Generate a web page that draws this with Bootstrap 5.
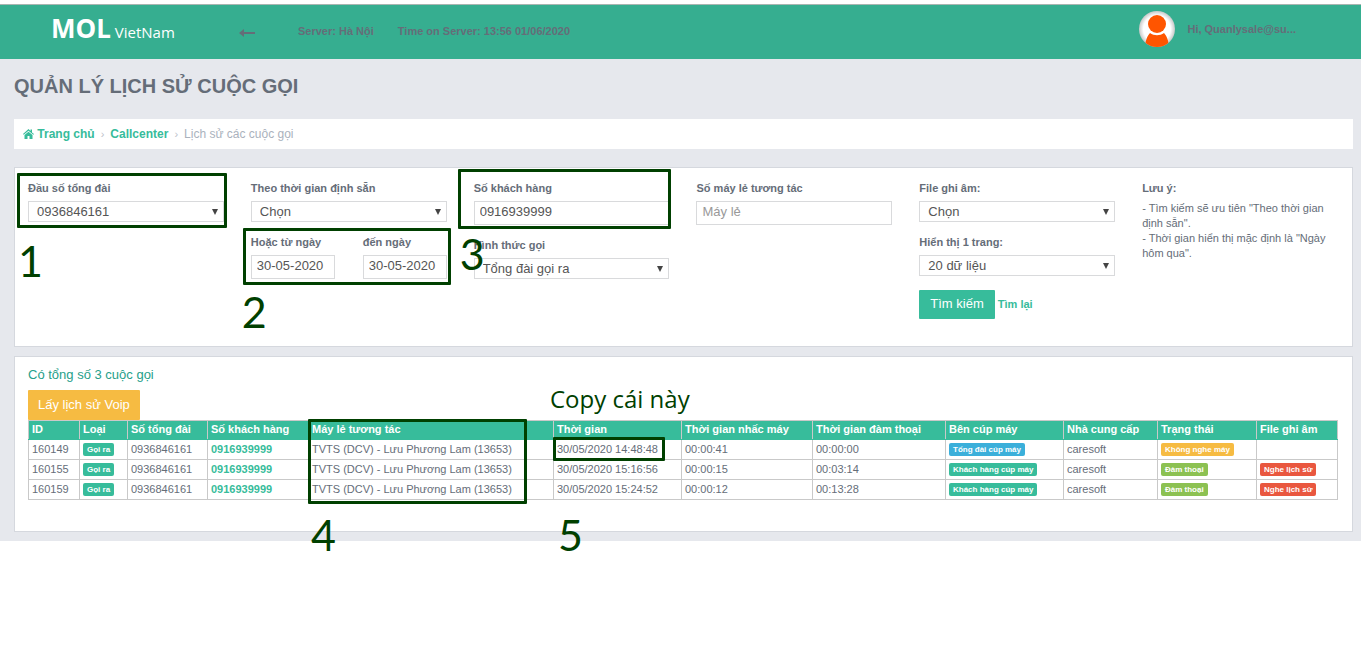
<!DOCTYPE html>
<html lang="vi">
<head>
<meta charset="utf-8">
<meta name="viewport" content="width=device-width, initial-scale=1">
<title>Quản lý lịch sử cuộc gọi</title>
<link href="https://cdn.jsdelivr.net/npm/bootstrap@5.3.0/dist/css/bootstrap.min.css" rel="stylesheet">
<style>
:root { --mint: #37bc9b; --note: #004000; --line: #d5d8de; }
body { font-family: "Liberation Sans", Arial, sans-serif; font-size: 11px; line-height: 15px; color: #656d78; background: #fff; min-height: 100vh; padding-top: 4px; }
a { color: var(--mint); text-decoration: none; font-weight: bold; }
.topbar { border-top: 1px solid #a9b5b1; background: #36ae90; height: 55px; padding: 0 65px 0 51px; font-weight: bold; }
.brand { font-family: "Open Sans", sans-serif; color: #fff; font-weight: normal; font-size: 15px; line-height: 32px; width: 188px; margin-top: 7px; }
.brand:hover { color: #fff; }
.brand b { font-size: 26px; }
.back-btn { color: #656d78; margin-top: 23px; }
.server, .clock { margin-top: 19px; }
.server { margin-left: 41px; }
.clock { margin-left: 24px; }
.account { margin-top: 4px; line-height: 13px; }
.workspace { background: #e6e8ed; padding: 14px 8px 9px 14px; }
h1 { font-size: 20px; line-height: 26px; font-weight: bold; margin: 0 0 20px; }
.crumbs { background: #fff; height: 30px; padding: 0 9px; margin-bottom: 18px; font-size: 12px; gap: 6px; }
.crumbs svg { vertical-align: -1px; }
.crumbs .sep { color: #bcc1c9; font-size: 11px; }
.crumbs .here { color: #aab2bd; }
.panel { background: #fff; border: 1px solid var(--line); }
.filters { min-height: 180px; padding-top: 12px; margin-bottom: 9px; }
.filters .row > * { padding-left: 13px; padding-right: 14px; }
.filters .row > .notes { padding-right: 10px; }
.filters label, .caption { display: block; font-weight: bold; line-height: 16px; margin-bottom: 5px; }
.field { position: relative; margin-bottom: 12px; }
.box { display: block; width: 100%; border: 1px solid #d9dadc; border-radius: 0; background: #fff; color: #555; font-size: 13px; height: 24px; padding: 0 5px 3px; }
.box::placeholder { color: #999; opacity: 1; }
select.box { height: 21px; padding: 0 8px 1px; appearance: none; background: #fff url("data:image/svg+xml,%3Csvg xmlns='http://www.w3.org/2000/svg' viewBox='0 0 6 6'%3E%3Cpath d='M0 0h6L3 6z' fill='%23444'/%3E%3C/svg%3E") no-repeat right 5px center / 6px 6px; }
.dates { display: grid; grid-template-columns: 1fr 1fr; column-gap: 28px; }
.act { border: 0; border-radius: 1px; color: #fff; font-size: 13px; line-height: 15px; padding: 6px 11px 8px; }
.act.search { background: var(--mint); margin-top: 2px; }
.act.voip { background: #f6bb42; padding: 7px 10px 8px; }
.results { padding: 10px 14px 31px 13px; }
.total { color: #26a08a; font-size: 13px; line-height: 15px; margin: 0 0 8px; }
.calls { width: 100%; table-layout: fixed; border-collapse: collapse; }
.calls th, .calls td { border: 1px solid #c9c9c9; height: 20px; padding: 0 3px 1px; line-height: 15px; white-space: nowrap; }
.calls th { height: 19px; background: var(--mint); color: #fff; border-bottom-color: var(--mint); }
.tag { display: inline-block; border-radius: 2px; background: var(--mint); color: #fff; font-size: 8px; font-weight: bold; line-height: 9px; padding: 2px 4px; vertical-align: middle; }
.tag.blue { background: #3bafda; } .tag.amber { background: #f6bb42; } .tag.lime { background: #8cc152; } .tag.red { background: #e9573f; }
/* guide marks laid over the form and the table */
.guide { position: absolute; border: 3px solid var(--note); border-radius: 1px; z-index: 2; pointer-events: none; }
.step { position: absolute; z-index: 3; font-family: Lato, sans-serif; font-size: 43px; line-height: 43px; color: var(--note); pointer-events: none; font-weight: normal; }
.hint { position: absolute; z-index: 3; font-family: "Open Sans", sans-serif; font-size: 24px; line-height: 32px; color: var(--note); white-space: nowrap; font-weight: normal; left: -4px; top: -38px; }
.g1 { inset: -7px -3px -6px -11px; } .s1 { left: -10px; top: 59px; }
.g2 { inset: -6px -4px -6px -8px; } .s2 { left: -9px; top: 56px; }
.g3 { inset: -11px -2px -4px -16px; } .s3 { left: -14px; top: 52px; }
.anchor { position: relative; overflow: visible; }
.g4 { left: -1px; top: -2px; width: 219px; height: 85px; } .s4 { left: 2px; top: 92px; }
.g5 { left: -1px; top: -3px; width: 112px; height: 24px; } .s5 { left: 4px; top: 92px; }
</style>
</head>
<body>
<header class="topbar d-flex align-items-start">
  <a class="brand" href="#"><b>MOL</b> VietNam</a>
  <a class="back-btn" href="#" aria-label="Quay lại"><svg class="d-block" width="18" height="10" viewBox="0 0 18 10"><path d="M0 5L5 1v3h11v2H5v3z" fill="currentColor"/></svg></a>
  <span class="server">Server: Hà Nội</span>
  <span class="clock">Time on Server: 13:56 01/06/2020</span>
  <div class="account d-flex ms-auto align-items-center">
    <svg width="36" height="40" viewBox="0 0 36 40"><defs><radialGradient id="av"><stop offset=".75" stop-color="#fff"/><stop offset="1" stop-color="#c8c8c8"/></radialGradient><clipPath id="round"><circle cx="18" cy="20" r="18"/></clipPath></defs><circle cx="18" cy="20" r="18" fill="url(#av)"/><g fill="#ff5500" clip-path="url(#round)"><circle cx="18" cy="15" r="9"/><path d="M6 40c0-7 2-13 5-16 4 3 10 3 14 0 3 3 5 9 5 16z"/></g></svg>
    <span class="ms-2 ps-1">Hi, Quanlysale@su...</span>
  </div>
</header>
<main class="workspace">
  <h1>QUẢN LÝ LỊCH SỬ CUỘC GỌI</h1>
  <nav class="crumbs d-flex align-items-center" aria-label="breadcrumb">
    <a href="#"><svg width="11" height="10" viewBox="0 0 11 10" fill="currentColor"><path d="M0 5L5.500 0 7.500 2V.5H9v3L11 5l-.7.8-4.800-4-4.800 4z"/><path d="M1.500 6l4-3.300 4 3.300v4H6.500V7h-2v3h-3z"/></svg> Trang chủ</a>
    <span class="sep">›</span><a href="#">Callcenter</a><span class="sep">›</span><span class="here">Lịch sử các cuộc gọi</span>
  </nav>
  <form class="panel filters">
    <div class="row g-0">
      <div class="col-2">
        <div class="field"><label for="hotline">Đầu số tổng đài</label><select id="hotline" class="box"><option>0936846161</option></select><span class="guide g1"></span><span class="step s1">1</span></div>
      </div>
      <div class="col-2">
        <div class="field"><label for="preset">Theo thời gian định sẵn</label><select id="preset" class="box"><option>Chọn</option></select></div>
        <div class="field dates">
          <div><label for="from">Hoặc từ ngày</label><input id="from" class="box" value="30-05-2020"></div>
          <div><label for="to">đến ngày</label><input id="to" class="box" value="30-05-2020"></div>
          <span class="guide g2"></span><span class="step s2">2</span>
        </div>
      </div>
      <div class="col-2">
        <div class="field"><label for="customer">Số khách hàng</label><input id="customer" class="box" value="0916939999"><span class="guide g3"></span><span class="step s3">3</span></div>
        <div class="field"><label for="kind">Hình thức gọi</label><select id="kind" class="box"><option>Tổng đài gọi ra</option></select></div>
      </div>
      <div class="col-2">
        <div class="field"><label for="ext">Số máy lẻ tương tác</label><input id="ext" class="box" placeholder="Máy lẻ"></div>
      </div>
      <div class="col-2">
        <div class="field"><label for="record">File ghi âm:</label><select id="record" class="box"><option>Chọn</option></select></div>
        <div class="field"><label for="size">Hiển thị 1 trang:</label><select id="size" class="box"><option>20 dữ liệu</option></select></div>
        <button type="button" class="act search">Tìm kiếm</button> <a href="#">Tìm lại</a>
      </div>
      <div class="col-2 notes">
        <div class="caption">Lưu ý:</div>
        <div>- Tìm kiếm sẽ ưu tiên "Theo thời gian định sẵn".<br>- Thời gian hiển thị mặc định là "Ngày hôm qua".</div>
      </div>
    </div>
  </form>
  <section class="panel results">
    <p class="total">Có tổng số 3 cuộc gọi</p>
    <button type="button" class="act voip d-block">Lấy lịch sử Voip</button>
    <table class="calls">
      <colgroup><col width="51"><col width="48"><col width="80"><col width="101"><col width="245"><col width="128"><col width="131"><col width="133"><col width="118"><col width="94"><col width="99"><col width="81"></colgroup>
      <thead><tr><th>ID</th><th>Loại</th><th>Số tổng đài</th><th>Số khách hàng</th><th class="anchor">Máy lẻ tương tác<span class="guide g4"></span><span class="step s4">4</span></th><th class="anchor">Thời gian<span class="hint">Copy cái này</span><span class="step s5">5</span></th><th>Thời gian nhấc máy</th><th>Thời gian đàm thoại</th><th>Bên cúp máy</th><th>Nhà cung cấp</th><th>Trạng thái</th><th>File ghi âm</th></tr></thead>
      <tbody>
        <tr><td>160149</td><td><span class="tag">Gọi ra</span></td><td>0936846161</td><td><a href="#">0916939999</a></td><td>TVTS (DCV) - Lưu Phương Lam (13653)</td><td class="anchor">30/05/2020 14:48:48<span class="guide g5"></span></td><td>00:00:41</td><td>00:00:00</td><td><span class="tag blue">Tổng đài cúp máy</span></td><td>caresoft</td><td><span class="tag amber">Không nghe máy</span></td><td></td></tr>
        <tr><td>160155</td><td><span class="tag">Gọi ra</span></td><td>0936846161</td><td><a href="#">0916939999</a></td><td>TVTS (DCV) - Lưu Phương Lam (13653)</td><td>30/05/2020 15:16:56</td><td>00:00:15</td><td>00:03:14</td><td><span class="tag">Khách hàng cúp máy</span></td><td>caresoft</td><td><span class="tag lime">Đàm thoại</span></td><td><a href="#" class="tag red">Nghe lịch sử</a></td></tr>
        <tr><td>160159</td><td><span class="tag">Gọi ra</span></td><td>0936846161</td><td><a href="#">0916939999</a></td><td>TVTS (DCV) - Lưu Phương Lam (13653)</td><td>30/05/2020 15:24:52</td><td>00:00:12</td><td>00:13:28</td><td><span class="tag">Khách hàng cúp máy</span></td><td>caresoft</td><td><span class="tag lime">Đàm thoại</span></td><td><a href="#" class="tag red">Nghe lịch sử</a></td></tr>
      </tbody>
    </table>
  </section>
</main>
<script src="https://cdn.jsdelivr.net/npm/bootstrap@5.3.0/dist/js/bootstrap.bundle.min.js"></script>
</body>
</html>
